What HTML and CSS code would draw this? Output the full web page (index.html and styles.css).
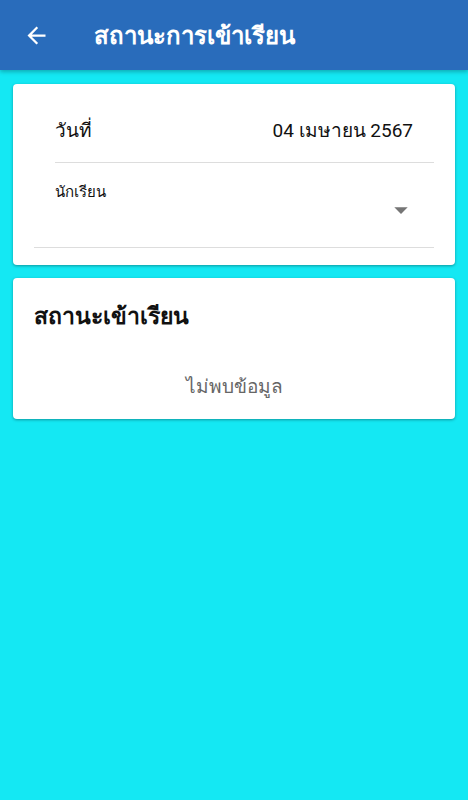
FILE: index.html
```html
<!DOCTYPE html>
<html lang="th">
<head>
    <meta charset="UTF-8">
    <meta name="viewport" content="width=device-width, initial-scale=1.0">
    <title>สถานะการเข้าเรียน</title>
    <link rel="stylesheet" href="styles.css">
</head>
<body>

<div class="app-bar">
    <svg class="back" width="24" height="24" viewBox="0 0 24 24">
        <path d="M20 11H7.83l5.59-5.59L12 4l-8 8 8 8 1.41-1.41L7.83 13H20v-2z" fill="#fff"/>
    </svg>
    <h1>สถานะการเข้าเรียน</h1>
</div>

<div class="content">
    <div class="card filter">
        <div class="date-row">
            <span>วันที่</span>
            <span>04 เมษายน 2567</span>
        </div>
        <div class="student">
            <label>นักเรียน</label>
            <div class="select">
                <svg width="32" height="32" viewBox="0 0 24 24">
                    <path d="M7 10l5 5 5-5z" fill="#757575"/>
                </svg>
            </div>
        </div>
    </div>

    <div class="card status">
        <h2>สถานะเข้าเรียน</h2>
        <p class="empty">ไม่พบข้อมูล</p>
    </div>
</div>

</body>
</html>
```

FILE: styles.css
```css
body {
    margin: 0;
    min-height: 100vh;
    font-family: Roboto, "Noto Sans", sans-serif;
    background-color: #14e8f3;
}
.app-bar {
    display: flex;
    align-items: center;
    height: 70px;
    padding: 0 0 0 23px;
    background-color: #296cbb;
    box-shadow: 0 2px 4px rgba(0, 0, 0, 0.25);
}
.app-bar .back {
    width: 27px;
    height: 27px;
}
.app-bar h1 {
    margin: 0 0 0 44px;
    color: #fff;
    font-size: 24px;
    font-weight: bold;
}
.content {
    padding: 14px 13px;
}
.card {
    background-color: #fff;
    border-radius: 4px;
    box-shadow: 0 1px 3px rgba(0, 0, 0, 0.35);
    margin-bottom: 13px;
}
.filter {
    padding: 0 21px 17px 21px;
}
.date-row {
    display: flex;
    justify-content: space-between;
    align-items: center;
    height: 64px;
    margin-left: 21px;
    padding: 14px 21px 0 0;
    border-bottom: 1px solid #ddd;
    font-size: 19px;
    color: #111;
}
.student {
    height: 67px;
    padding-top: 17px;
    border-bottom: 1px solid #ddd;
}
.student label {
    display: block;
    margin-left: 21px;
    font-size: 15px;
    color: #111;
}
.select {
    display: flex;
    justify-content: flex-end;
    padding-right: 17px;
    margin-top: -10px;
}
.status {
    padding: 20px 21px 18px 21px;
}
.status h2 {
    margin: 0;
    font-size: 23px;
    font-weight: 600;
    color: #111;
}
.empty {
    margin: 37px 0 0 0;
    text-align: center;
    font-size: 19px;
    color: #666;
}
```
